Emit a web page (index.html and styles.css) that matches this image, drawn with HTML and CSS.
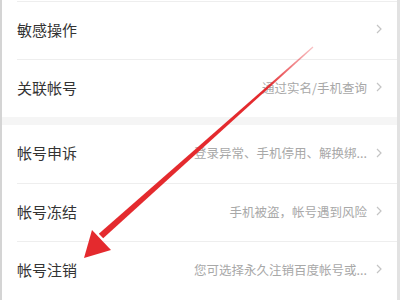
FILE: index.html
```html
<!DOCTYPE html>
<html lang="zh-CN">
<head>
  <meta charset="UTF-8" />
  <meta name="viewport" content="width=device-width, initial-scale=1.0"/>
  <title>帐号与安全</title>
  <link rel="stylesheet" href="styles.css">
</head>
<body>
  <div class="page">
    <div class="group">
      <div class="item">
        <span class="label">敏感操作</span>
        <svg class="chevron" viewBox="0 0 6 10"><path d="M1 1l4 4-4 4" /></svg>
      </div>
      <div class="item">
        <span class="label">关联帐号</span>
        <span class="hint">通过实名/手机查询</span>
        <svg class="chevron" viewBox="0 0 6 10"><path d="M1 1l4 4-4 4" /></svg>
      </div>
    </div>

    <div class="gap"></div>

    <div class="group">
      <div class="item">
        <span class="label">帐号申诉</span>
        <span class="hint">登录异常、手机停用、解换绑...</span>
        <svg class="chevron" viewBox="0 0 6 10"><path d="M1 1l4 4-4 4" /></svg>
      </div>
      <div class="item">
        <span class="label">帐号冻结</span>
        <span class="hint">手机被盗，帐号遇到风险</span>
        <svg class="chevron" viewBox="0 0 6 10"><path d="M1 1l4 4-4 4" /></svg>
      </div>
      <div class="item">
        <span class="label">帐号注销</span>
        <span class="hint">您可选择永久注销百度帐号或...</span>
        <svg class="chevron" viewBox="0 0 6 10"><path d="M1 1l4 4-4 4" /></svg>
      </div>
    </div>

    <!-- red pointer drawn over the list -->
    <svg class="arrow" viewBox="0 0 395 300">
      <defs>
        <linearGradient id="fade" x1="311" y1="47" x2="99" y2="240" gradientUnits="userSpaceOnUse">
          <stop offset="0" stop-color="#e8323a" stop-opacity="0.3" />
          <stop offset="0.22" stop-color="#e42a2e" />
          <stop offset="1" stop-color="#e42a2e" />
        </linearGradient>
      </defs>
      <polygon fill="url(#fade)" points="311.4,47.5 310.6,46.5 96.8,233.8 101.2,238.2" />
      <polygon fill="#e42a2e" points="82,258 90,230 109,250" />
    </svg>
  </div>
</body>
</html>
```

FILE: styles.css
```css
* {
  box-sizing: border-box;
  font-family: "Noto Sans CJK SC", "Noto Sans", sans-serif;
}

body {
  margin: 0;
  padding: 0;
  background-color: #fff;
}

.page {
  position: relative;
  height: 300px;
  padding-top: 1px;
  border-left: 2px solid #d4d4d4;
  border-right: 3px solid #e2e2e2;
  background-color: #fff;
  overflow: hidden;
}

.gap {
  height: 8px;
  background-color: #f5f5f5;
}

.item {
  display: flex;
  align-items: center;
  height: 58px;
  margin-left: 15px;
  padding-right: 15px;
  padding-bottom: 3px;
  border-top: 1px solid #eeeeee;
}

.gap + .group .item:first-child {
  border-top: none;
}

.label {
  flex: 1;
  font-size: 15px;
  color: #333;
}

.hint {
  font-size: 12.5px;
  color: #a8a8a8;
  margin-right: 9px;
}

.chevron {
  width: 6px;
  height: 10px;
  fill: none;
  stroke: #c4c4c4;
  stroke-width: 1.2;
}

.arrow {
  position: absolute;
  left: 0;
  top: 0;
  width: 395px;
  height: 300px;
  pointer-events: none;
}
```
